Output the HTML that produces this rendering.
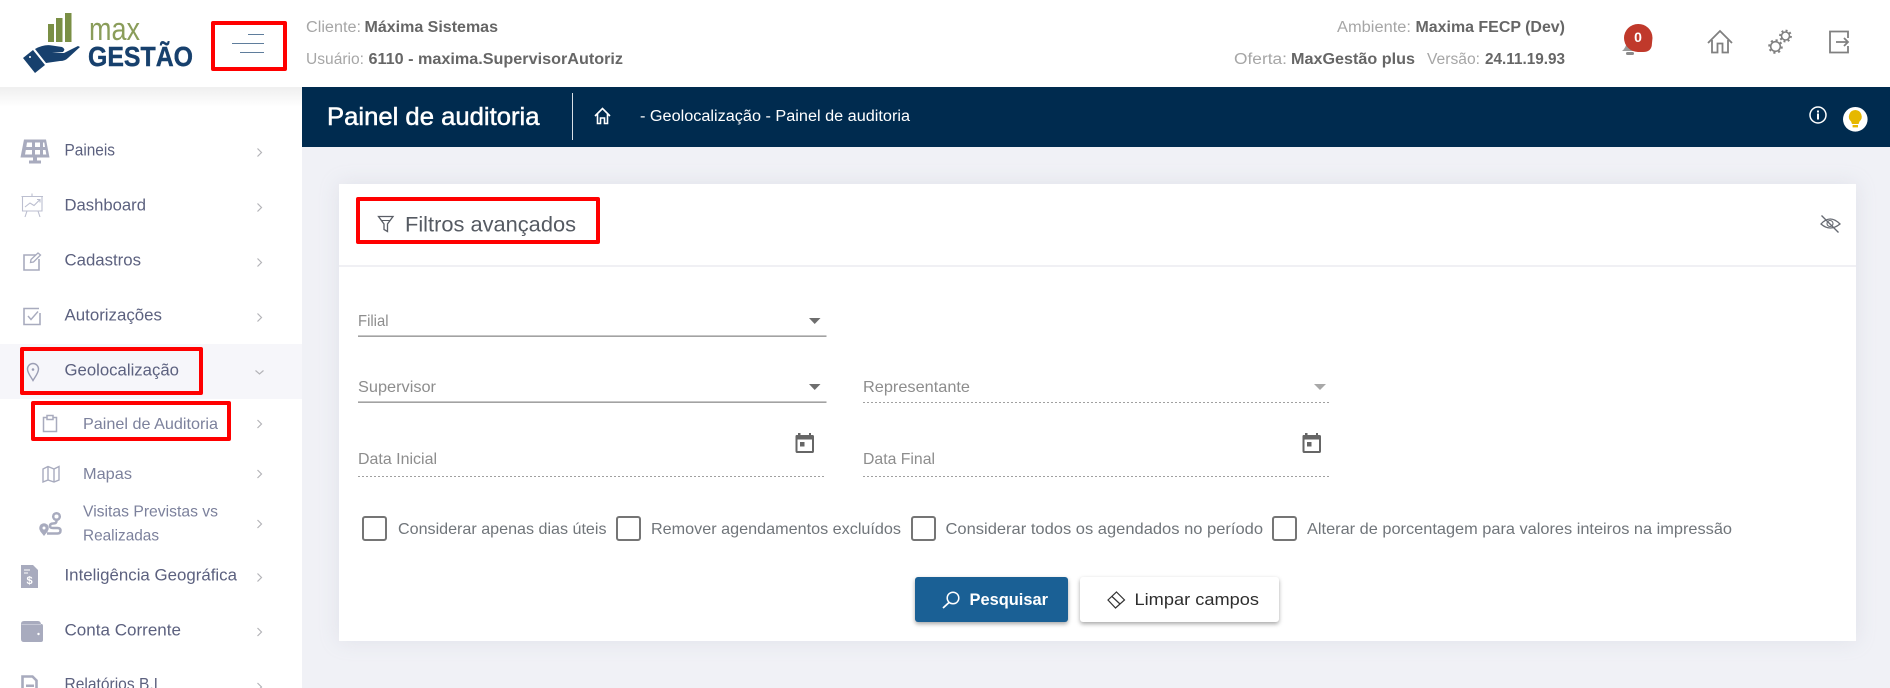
<!DOCTYPE html>
<html lang="pt-BR">
<head>
<meta charset="utf-8">
<title>Painel de auditoria</title>
<style>
html,body{margin:0;padding:0;width:1890px;height:688px;overflow:hidden;background:#f0f1f6;font-family:"Liberation Sans",sans-serif}
.b{position:absolute;box-sizing:border-box}
#side{left:0;top:87px;width:302px;height:601px;background:#fff}
#sideshade{left:0;top:87px;width:302px;height:20px;background:linear-gradient(#efefef,#fff)}
#head{left:0;top:0;width:1890px;height:87px;background:#fff}
#nav{left:302px;top:87px;width:1588px;height:60px;background:#002b4f}
#geo{left:0;top:344px;width:302px;height:55px;background:#f6f6fa}
#card{left:339px;top:184px;width:1517px;height:457px;background:#fff;box-shadow:0 0 18px rgba(180,183,200,.25)}
#hr{left:339px;top:265px;width:1517px;height:2px;background:#f0f0f4}
.r{border:4px solid #f00;border-radius:2px}
.cb{width:25px;height:25px;border:2px solid #757575;border-radius:3px;top:516px}
#bp{left:915px;top:577px;width:153px;height:45px;background:#1a6095;border-radius:3px;box-shadow:0 2px 4px rgba(0,0,0,.35)}
#bl{left:1080px;top:577px;width:199px;height:45px;background:#fff;border-radius:3px;box-shadow:0 2px 4px rgba(0,0,0,.35)}
svg{position:absolute;left:0;top:0}
text{font-family:"Liberation Sans",sans-serif}
.h{font-size:15.5px;fill:#a6a6a6}
.hb{font-size:15.5px;fill:#666;font-weight:bold}
.m{font-size:16.5px;fill:#5c617f}
.s{font-size:16px;fill:#7c819c}
.f{font-size:16px;fill:#8d8d8d}
.c{font-size:16px;fill:#70757a}
.ic{fill:#a8abbe}
.il{fill:none;stroke:#a8abbe;stroke-width:1.6}
.ch{fill:none;stroke:#b4b4b8;stroke-width:1.2}
</style>
</head>
<body>
<div class="b" id="side"></div>
<div class="b" id="sideshade"></div>
<div class="b" id="geo"></div>
<div class="b" id="head"></div>
<div class="b" id="nav"></div>
<div class="b" id="card"></div>
<div class="b" id="hr"></div>
<div class="b cb" style="left:362px"></div>
<div class="b cb" style="left:616px"></div>
<div class="b cb" style="left:911px"></div>
<div class="b cb" style="left:1272px"></div>
<div class="b" id="bp"></div>
<div class="b" id="bl"></div>
<div class="b r" style="left:211px;top:21px;width:76px;height:50px"></div>
<div class="b r" style="left:356px;top:197px;width:244px;height:47px"></div>
<div class="b r" style="left:20px;top:347px;width:183px;height:48px"></div>
<div class="b r" style="left:31px;top:401px;width:200px;height:40px"></div>

<svg width="1890" height="688" viewBox="0 0 1890 688" xmlns="http://www.w3.org/2000/svg">
<!-- logo -->
<rect x="48" y="24" width="6" height="18" fill="#7a8f45"/>
<rect x="56" y="18" width="6.5" height="24" fill="#7a8f45"/>
<rect x="65" y="13" width="6.5" height="29" fill="#7a8f45"/>
<path d="M23 58L33 50L45 65L35 73Z" fill="#17406d"/>
<circle cx="30" cy="57" r="1" fill="#fff"/>
<path d="M35 49Q44 44 52 45.500L62 47Q66 49 63 52L52 53L64 53L78 46L80 47L68 58Q65 61 60 61L46 63Z" fill="#17406d"/>
<text x="89" y="40" font-size="32" fill="#8a9d5a" textLength="51" lengthAdjust="spacingAndGlyphs">max</text>
<text x="88" y="66" font-size="27.500" font-weight="bold" fill="#17406d" stroke="#17406d" stroke-width=".4" textLength="105" lengthAdjust="spacingAndGlyphs">GESTÃO</text>
<!-- hamburger -->
<path d="M248 34.500H264M232 43.500H264M240 52.500H264" stroke="#5f7d9c" stroke-width="1"/>
<!-- header texts -->
<text class="h" x="306" y="32" textLength="55" lengthAdjust="spacingAndGlyphs">Cliente:</text>
<text class="hb" x="364.500" y="32" textLength="133.500" lengthAdjust="spacingAndGlyphs">Máxima Sistemas</text>
<text class="h" x="306" y="64" textLength="58" lengthAdjust="spacingAndGlyphs">Usuário:</text>
<text class="hb" x="368.500" y="64" textLength="254.500" lengthAdjust="spacingAndGlyphs">6110 - maxima.SupervisorAutoriz</text>
<text class="h" x="1337" y="32" textLength="74" lengthAdjust="spacingAndGlyphs">Ambiente:</text>
<text class="hb" x="1415.500" y="32" textLength="149.500" lengthAdjust="spacingAndGlyphs">Maxima FECP (Dev)</text>
<text class="h" x="1234" y="64" textLength="53" lengthAdjust="spacingAndGlyphs">Oferta:</text>
<text class="hb" x="1291" y="64" textLength="124" lengthAdjust="spacingAndGlyphs">MaxGestão plus</text>
<text class="h" x="1427" y="64" textLength="53" lengthAdjust="spacingAndGlyphs">Versão:</text>
<text class="hb" x="1485" y="64" textLength="80" lengthAdjust="spacingAndGlyphs">24.11.19.93</text>
<!-- bell + badge -->
<path d="M1622 51Q1626 48 1627 41L1634 41L1634 51Z" fill="#9a9a9a"/>
<rect x="1626" y="52" width="8" height="3" rx="1.500" fill="#8a8a8a"/>
<path d="M1638 24A14 14 0 0 1 1652.500 38L1652 43Q1652 52 1643 52L1638 52A14 14 0 0 1 1638 24Z" fill="#c0392b"/>
<text x="1638" y="42" font-size="14" font-weight="bold" fill="#fff" text-anchor="middle">0</text>
<!-- home -->
<path d="M1708 43L1720 31L1732 43M1712 40V52.500H1717.500V43.500H1722.500V52.500H1728V40" fill="none" stroke="#808080" stroke-width="1.800"/>
<!-- gears -->
<g fill="none" stroke="#808080">
<circle cx="1775.500" cy="46.500" r="4.800" stroke-width="1.600"/>
<circle cx="1785.500" cy="36" r="4" stroke-width="1.600"/>
<circle cx="1775.500" cy="46.500" r="6.400" stroke-width="1.800" stroke-dasharray="2.200 2.800"/>
<circle cx="1785.500" cy="36" r="5.500" stroke-width="1.800" stroke-dasharray="2 2.300"/>
</g>
<!-- exit -->
<path d="M1848 38V31.500H1830V52.500H1848V46M1836 42H1848M1844 38L1848 42L1844 46" fill="none" stroke="#808080" stroke-width="1.800"/>
<!-- nav -->
<text x="327" y="125" font-size="25" fill="#fff" stroke="#fff" stroke-width=".5" textLength="212.500" lengthAdjust="spacingAndGlyphs">Painel de auditoria</text>
<rect x="572" y="93" width="1" height="47" fill="#d8dfe6"/>
<path d="M595 116L602.500 108.500L610 116M597.500 114V123.500H600.500V118H604.500V123.500H607.500V114" fill="none" stroke="#fff" stroke-width="1.600"/>
<text x="640" y="121" font-size="15.500" fill="#fff" textLength="270" lengthAdjust="spacingAndGlyphs">- Geolocalização - Painel de auditoria</text>
<circle cx="1818" cy="115" r="8" fill="none" stroke="#fff" stroke-width="1.500"/>
<rect x="1817" y="113.500" width="2" height="6" fill="#fff"/>
<rect x="1817" y="110.500" width="2" height="2" fill="#fff"/>
<circle cx="1855.300" cy="119.300" r="12.300" fill="#fff"/>
<path d="M1855.300 110A6.600 6.600 0 0 1 1859.500 121.500L1858.600 124H1852L1851.100 121.500A6.600 6.600 0 0 1 1855.300 110Z" fill="#e6b800"/>
<rect x="1852.600" y="125" width="5.400" height="2.400" fill="#e6b800"/>
<!-- sidebar icons -->
<path d="M24 139.500H46L49.500 157.500H20.500Z" class="ic"/>
<path d="M27 142.500H32V147H26.300ZM35 142.500H40V147H35ZM43 142.500H44.300L45 147H43ZM25.800 150H32V154.500H25ZM35 150H40V154.500H35ZM43 150H45.500L46.300 154.500H43Z" fill="#fff"/>
<rect x="33" y="157" width="4" height="4" class="ic"/><rect x="29" y="160.500" width="12" height="3" class="ic"/>
<path d="M21.500 196.500H43M22.500 196.500V211H42V196.500M25 217L27 211M40 217L38 211M32 193.500V196M25 207L30 203L34 205.500L40 199.500M37 199.500H40V202.500" fill="none" stroke="#bcbfd0" stroke-width="1.100"/>
<path d="M37 255H24V270H39V259" class="il"/><path d="M30.500 262.500L31 259.500L38 253L40.500 255L33.500 262Z" fill="#fff" stroke="#a8abbe" stroke-width="1.300"/>
<path d="M39 308.500H24V324.500H40V313" class="il"/><path d="M28 316L31 319.500L38 311.500" fill="none" stroke="#a8abbe" stroke-width="1.400"/>
<path d="M33 363.500A5.500 5.500 0 0 1 38.500 369C38.500 373 35 377 33 380.500C31 377 27.500 373 27.500 369A5.500 5.500 0 0 1 33 363.500Z" fill="none" stroke="#9b9eb4" stroke-width="1.400"/><circle cx="33" cy="369.500" r="1.300" fill="#9b9eb4"/>
<path d="M47 417.500H43.500V431.500H56.500V417.500H53M47 415.500H53V419.500H47Z" fill="none" stroke="#a8abbe" stroke-width="1.500"/>
<path d="M43 469L48 466.500L54 469L59 466.500V480L54 482L48 480L43 482ZM48 466.500V480M54 469V482" fill="none" stroke="#a8abbe" stroke-width="1.400"/>
<circle cx="44" cy="528" r="4.800" class="ic"/><path d="M40 531L44 536L48 531Z" class="ic"/><circle cx="44" cy="528" r="1.500" fill="#fff"/>
<circle cx="56.500" cy="516.500" r="3.300" fill="none" stroke="#a8abbe" stroke-width="2.500"/>
<path d="M56.500 520.500V521Q56.500 523.500 53 523.500Q50 523.500 50 526Q50 528 53 528H57.500Q60.500 528 60.500 530.500Q60.500 533.500 57.500 533.500H47" fill="none" stroke="#a8abbe" stroke-width="2.500"/>
<path d="M21 565H33L38 570V588H21Z" class="ic"/><path d="M24 570H30M24 573H28" stroke="#fff" stroke-width="1"/>
<text x="29.500" y="584" font-size="11" font-weight="bold" fill="#fff" text-anchor="middle">$</text>
<path d="M24 621H38Q40.500 621 41 624H41.500Q43 624 43 626V640Q43 642 41 642H24Q21 642 21 639V624Q21 621 24 621Z" class="ic"/><path d="M21.500 624.500H41" stroke="#d0d2de" stroke-width=".8"/><circle cx="38.500" cy="634" r="1.200" fill="#fff"/>
<path d="M22.500 689V676.500H32.500L36.500 680.500V689" fill="#fff" stroke="#a8abbe" stroke-width="2.600"/><rect x="26" y="684.500" width="8" height="2.500" class="ic"/>
<!-- sidebar text -->
<text class="m" x="64.500" y="155.500" textLength="50.500" lengthAdjust="spacingAndGlyphs">Paineis</text>
<text class="m" x="64.500" y="210.500" textLength="81.500" lengthAdjust="spacingAndGlyphs">Dashboard</text>
<text class="m" x="64.500" y="265.500" textLength="76.500" lengthAdjust="spacingAndGlyphs">Cadastros</text>
<text class="m" x="64.500" y="320.500" textLength="97.500" lengthAdjust="spacingAndGlyphs">Autorizações</text>
<text class="m" x="64.500" y="375.500" textLength="114.500" lengthAdjust="spacingAndGlyphs">Geolocalização</text>
<text class="s" x="83" y="429" textLength="135" lengthAdjust="spacingAndGlyphs">Painel de Auditoria</text>
<text class="s" x="83" y="479" textLength="49" lengthAdjust="spacingAndGlyphs">Mapas</text>
<text class="s" x="83" y="516.500" textLength="135" lengthAdjust="spacingAndGlyphs">Visitas Previstas vs</text>
<text class="s" x="83" y="540.500" textLength="76" lengthAdjust="spacingAndGlyphs">Realizadas</text>
<text class="m" x="64.500" y="580.500" textLength="172.500" lengthAdjust="spacingAndGlyphs">Inteligência Geográfica</text>
<text class="m" x="64.500" y="635.500" textLength="116.500" lengthAdjust="spacingAndGlyphs">Conta Corrente</text>
<text class="m" x="64.500" y="689.500" textLength="93.500" lengthAdjust="spacingAndGlyphs">Relatórios B.I</text>
<!-- chevrons -->
<path class="ch" d="M257.500 148.500L261.500 152.500L257.500 156.500M257.500 203.500L261.500 207.500L257.500 211.500M257.500 258.500L261.500 262.500L257.500 266.500M257.500 313.500L261.500 317.500L257.500 321.500M255.500 370.500L259.500 374L263.500 370.500M257.500 420L261.500 424L257.500 428M257.500 470L261.500 474L257.500 478M257.500 520L261.500 524L257.500 528M257.500 573.500L261.500 577.500L257.500 581.500M257.500 628L261.500 632L257.500 636M257.500 683L261.500 687L257.500 691"/>
<!-- card header -->
<path d="M378.500 216.500H393L387.500 224V231.500L384 229.500V224Z" fill="none" stroke="#5a5e66" stroke-width="1.300"/>
<path d="M381.500 220.500H390" stroke="#5a5e66" stroke-width="1"/>
<text x="405" y="231.500" font-size="21" fill="#555a62" textLength="171" lengthAdjust="spacingAndGlyphs">Filtros avançados</text>
<path d="M1821 224Q1830 214 1840 224Q1830 232 1821 224Z" fill="none" stroke="#666a72" stroke-width="1.300"/>
<circle cx="1830" cy="223.500" r="3" fill="none" stroke="#666a72" stroke-width="1.100"/>
<path d="M1821.500 215.500L1838.500 232.500" stroke="#666a72" stroke-width="1.300"/>
<!-- fields -->
<text class="f" x="358" y="326" textLength="30.500" lengthAdjust="spacingAndGlyphs">Filial</text>
<rect x="358" y="335.500" width="468.500" height="1.300" fill="#8c8c8c"/>
<path d="M809 318H820.500L814.700 324Z" fill="#6e6e6e"/>
<text class="f" x="358" y="392" textLength="78" lengthAdjust="spacingAndGlyphs">Supervisor</text>
<rect x="358" y="401.500" width="468.500" height="1.300" fill="#8c8c8c"/>
<path d="M809 384H820.500L814.700 390Z" fill="#6e6e6e"/>
<text class="f" x="863" y="392" textLength="107" lengthAdjust="spacingAndGlyphs">Representante</text>
<path d="M863 402.500H1331" stroke="#a0a0a0" stroke-dasharray="2 2" stroke-width="1"/>
<path d="M1314 384H1326L1320 390Z" fill="#a8a8a8"/>
<text class="f" x="358" y="464" textLength="79" lengthAdjust="spacingAndGlyphs">Data Inicial</text>
<path d="M358 476.500H826" stroke="#a0a0a0" stroke-dasharray="2 2" stroke-width="1"/>
<text class="f" x="863" y="464" textLength="72" lengthAdjust="spacingAndGlyphs">Data Final</text>
<path d="M863 476.500H1331" stroke="#a0a0a0" stroke-dasharray="2 2" stroke-width="1"/>
<path d="M799 433V435H797.500Q796.500 435 796.500 436.500V451Q796.500 453 798 453H813.500Q815 453 815 451V436.500Q815 435 813.500 435H812V433H810V435H801.500V433ZM798.500 439.500H813V451H798.500Z" fill="#666" fill-rule="evenodd" transform="translate(-1 0)"/>
<rect x="800" y="442" width="4.500" height="4.500" fill="#666"/>
<path d="M1305 433V435H1303.500Q1302.500 435 1302.500 436.500V451Q1302.500 453 1304 453H1319.500Q1321 453 1321 451V436.500Q1321 435 1319.500 435H1318V433H1316V435H1307.500V433ZM1304.500 439.500H1319V451H1304.500Z" fill="#666" fill-rule="evenodd"/>
<rect x="1307" y="442" width="4.500" height="4.500" fill="#666"/>
<!-- checkbox labels -->
<text class="c" x="398" y="534" textLength="208.500" lengthAdjust="spacingAndGlyphs">Considerar apenas dias úteis</text>
<text class="c" x="651" y="534" textLength="250" lengthAdjust="spacingAndGlyphs">Remover agendamentos excluídos</text>
<text class="c" x="945.500" y="534" textLength="317.500" lengthAdjust="spacingAndGlyphs">Considerar todos os agendados no período</text>
<text class="c" x="1307" y="534" textLength="425" lengthAdjust="spacingAndGlyphs">Alterar de porcentagem para valores inteiros na impressão</text>
<!-- buttons -->
<circle cx="953" cy="598" r="5.800" fill="none" stroke="#fff" stroke-width="1.500"/>
<path d="M949 602.500L943 608" stroke="#fff" stroke-width="1.800"/>
<text x="969.500" y="605" font-size="16.500" font-weight="bold" fill="#fff" textLength="78.500" lengthAdjust="spacingAndGlyphs">Pesquisar</text>
<path d="M1116.500 592L1124.500 600L1115.500 608L1108 600Z M1112 596.500L1120 604" fill="none" stroke="#333" stroke-width="1.200"/>
<text x="1134.500" y="605" font-size="16.500" fill="#2e2e2e" textLength="124.500" lengthAdjust="spacingAndGlyphs">Limpar campos</text>
</svg>
</body>
</html>
